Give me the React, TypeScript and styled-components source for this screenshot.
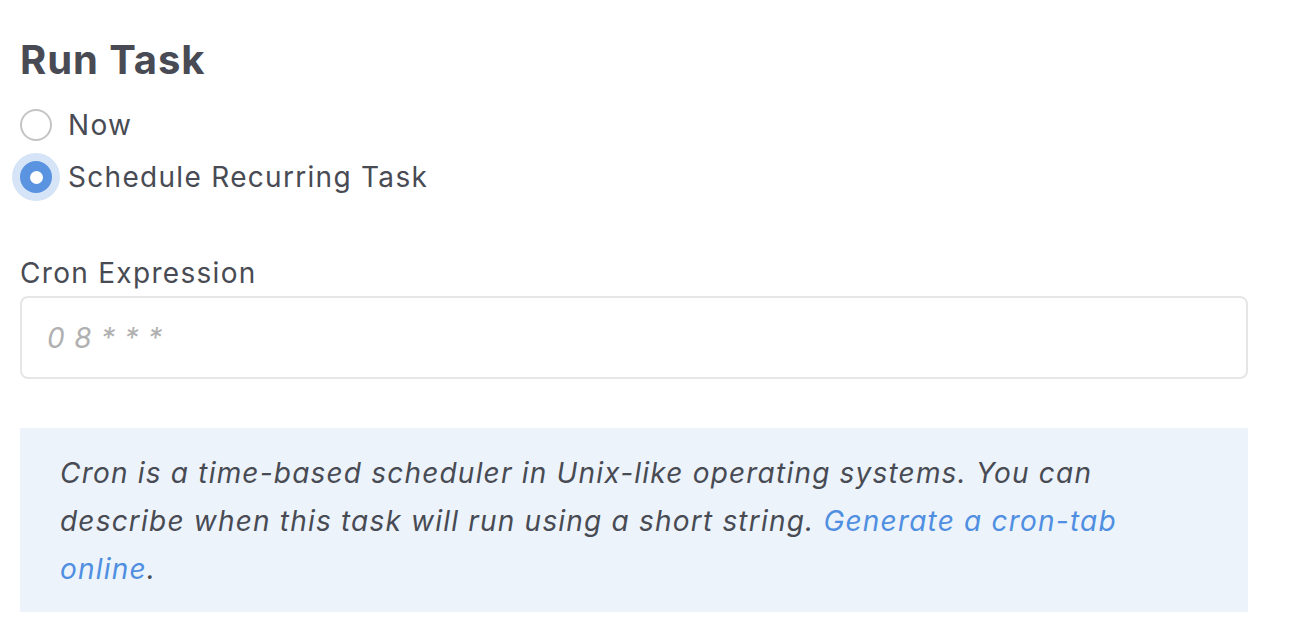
import styled, { createGlobalStyle } from "styled-components";

const GlobalStyle = createGlobalStyle`
  body {
    margin: 0;
    background: #ffffff;
    font-family: Inter, "Noto Sans", sans-serif;
    color: #484b53;
  }
`;

const Page = styled.div`
  width: 1228px;
  padding: 30px 0 0 20px;
`;

const Title = styled.h1`
  margin: 0 0 14px;
  font-size: 40px;
  font-weight: 700;
  line-height: 60px;
  letter-spacing: 0.9px;
  color: #484b53;
`;

const RadioGroup = styled.div`
  display: flex;
  flex-direction: column;
  gap: 10px;
`;

const RadioRow = styled.label`
  display: flex;
  align-items: center;
  gap: 16px;
  height: 42px;
  font-size: 28px;
  letter-spacing: 1.3px;
  cursor: pointer;
`;

const RadioCircle = styled.span<{ $checked?: boolean }>`
  box-sizing: border-box;
  width: 32px;
  height: 32px;
  border-radius: 50%;
  flex-shrink: 0;
  display: flex;
  align-items: center;
  justify-content: center;
  border: ${(p) => (p.$checked ? "none" : "2px solid #c4c4c4")};
  background: ${(p) => (p.$checked ? "#5a93df" : "#fff")};
  box-shadow: ${(p) => (p.$checked ? "0 0 0 8px #d5e4f7" : "none")};

  &::after {
    content: "";
    display: ${(p) => (p.$checked ? "block" : "none")};
    width: 13px;
    height: 13px;
    border-radius: 50%;
    background: #fff;
  }
`;

const Field = styled.div`
  margin-top: 54px;
`;

const Label = styled.div`
  font-size: 28px;
  line-height: 42px;
  letter-spacing: 1.3px;
  margin-bottom: 2px;
`;

const Input = styled.input`
  box-sizing: border-box;
  display: block;
  width: 100%;
  height: 83px;
  padding: 0 25px;
  border: 2px solid #e6e6e6;
  border-radius: 8px;
  font-family: Inter, "Noto Sans", sans-serif;
  font-size: 28px;
  letter-spacing: 0.8px;
  color: #484b53;
  outline: none;

  &::placeholder {
    color: #b0b0b0;
    font-style: italic;
  }
`;

const Info = styled.div`
  margin-top: 49px;
  background: #ecf3fb;
  padding: 21px 100px 19px 40px;
  font-size: 28px;
  line-height: 48px;
  letter-spacing: 1.2px;
  font-style: italic;
  color: #484b53;
`;

const Link = styled.a`
  color: #4f8ee0;
  text-decoration: none;
`;

export default function App() {
  return (
    <>
      <GlobalStyle />
      <Page>
        <Title>Run Task</Title>
        <RadioGroup>
          <RadioRow>
            <RadioCircle />
            Now
          </RadioRow>
          <RadioRow>
            <RadioCircle $checked />
            Schedule Recurring Task
          </RadioRow>
        </RadioGroup>
        <Field>
          <Label>Cron Expression</Label>
          <Input placeholder="0 8 * * *" />
        </Field>
        <Info>
          Cron is a time-based scheduler in Unix-like operating systems. You can
          describe when this task will run using a short string.{" "}
          <Link href="#">Generate a cron-tab online</Link>.
        </Info>
      </Page>
    </>
  );
}
